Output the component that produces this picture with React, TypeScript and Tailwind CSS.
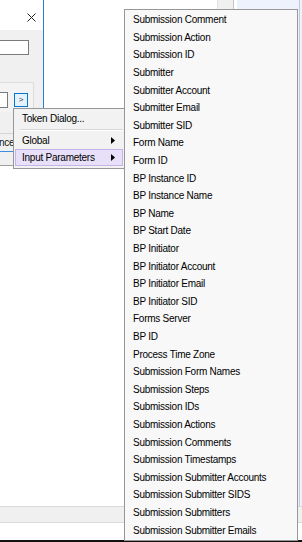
const PARAMS = [
  'Submission Comment',
  'Submission Action',
  'Submission ID',
  'Submitter',
  'Submitter Account',
  'Submitter Email',
  'Submitter SID',
  'Form Name',
  'Form ID',
  'BP Instance ID',
  'BP Instance Name',
  'BP Name',
  'BP Start Date',
  'BP Initiator',
  'BP Initiator Account',
  'BP Initiator Email',
  'BP Initiator SID',
  'Forms Server',
  'BP ID',
  'Process Time Zone',
  'Submission Form Names',
  'Submission Steps',
  'Submission IDs',
  'Submission Actions',
  'Submission Comments',
  'Submission Timestamps',
  'Submission Submitter Accounts',
  'Submission Submitter SIDS',
  'Submission Submitters',
  'Submission Submitter Emails',
]

function Arrow() {
  return (
    <svg width="4" height="7" viewBox="0 0 4 7" className="shrink-0">
      <path d="M0 0 L4 3.5 L0 7 Z" fill="#000" />
    </svg>
  )
}

function Dialog() {
  return (
    <div className="flex flex-col w-[44px] h-[166px] border-r border-[#2b7bd4]">
      <div className="h-[30px] bg-white flex justify-end pr-[7px] pt-[13px]">
        <svg width="9" height="9" viewBox="0 0 9 9">
          <path d="M0.5 0.5 L8.5 8.5 M8.5 0.5 L0.5 8.5" stroke="#222" strokeWidth="1" />
        </svg>
      </div>
      <div className="flex-1 flex flex-col bg-[#f0f0f0] border-b border-[#a0a0a0]">
        <div className="mt-[10px] w-[29px] h-[15px] bg-white border border-l-0 border-[#7a7a7a]" />
        <div className="mt-[27px] w-[34px] h-[30px] bg-[#f3f3f3] border-t border-r border-[#dcdcdc] flex items-start pt-[9px]">
          <div className="w-[8px] h-[16px] bg-white border border-l-0 border-[#7a7a7a]" />
          <div className="ml-[6px] mt-[1px] w-[14px] h-[14px] bg-[#e5f1fb] border border-[#0078d7] flex items-center justify-center text-[8px] leading-none text-[#333]">
            &gt;
          </div>
        </div>
        <div className="mt-[21px] h-[19px] border-t border-[#d5d5d5] border-b border-b-[#3d8ee0] flex items-center text-[10px] leading-none text-[#111] overflow-hidden whitespace-nowrap tracking-[-0.25px]">
          <span className="-ml-[1px]">nce</span>
        </div>
      </div>
    </div>
  )
}

export default function App() {
  return (
    <div
      className="relative w-[302px] h-[542px] overflow-hidden bg-white flex flex-col"
      style={{ fontFamily: '"Liberation Sans", Arial, sans-serif' }}
    >
      <div className="flex h-[506px]">
        <div className="w-[44px] flex flex-col">
          <Dialog />
        </div>
        <div className="w-[173px] bg-white" />
        <div className="w-[17px] bg-[#f0f0f0] border-l border-[#e3e3e3] border-r border-r-[#c6c6c6]" />
        <div className="w-[3px] bg-white" />
        <div className="flex-1 flex bg-[#eef2fc]">
          <div className="flex-1" />
          <div className="w-[1px] bg-[#c4c8d4] mr-[2px]" />
        </div>
      </div>
      <div className="h-[17px] bg-[#f0f0f0] border-y border-[#dadada]" />
      <div className="h-[17px] bg-white" />
      <div className="h-[2px] bg-[#111]" />

      {/* context menu */}
      <div className="absolute left-[13px] top-[108px] w-[112px] h-[61px] bg-[#f2f2f2] border border-[#979797] p-[1px] text-[10px] text-black tracking-[-0.25px]">
        <div className="h-[17px] flex items-center pl-[7px]">Token Dialog...</div>
        <div className="h-[5px] flex flex-col pt-[2px] pl-[5px]">
          <div className="h-[1px] bg-[#d7d7d7]" />
          <div className="h-[1px] bg-white" />
        </div>
        <div className="h-[17px] flex items-center justify-between pl-[7px] pr-[8px]">
          <span>Global</span>
          <Arrow />
        </div>
        <div className="h-[17px] flex items-center justify-between pl-[6px] pr-[7px] bg-[#e8dff8] border border-[#c5b3ea]">
          <span>Input Parameters</span>
          <Arrow />
        </div>
      </div>

      {/* submenu */}
      <div className="absolute left-[124px] top-[9px] w-[174px] h-[532px] bg-[#f8f8f8] border border-[#979797] py-[1px] text-[10px] text-black tracking-[-0.25px]">
        {PARAMS.map((p) => (
          <div key={p} className="h-[17.6px] flex items-center pl-[8px] whitespace-nowrap">
            {p}
          </div>
        ))}
      </div>
    </div>
  )
}
